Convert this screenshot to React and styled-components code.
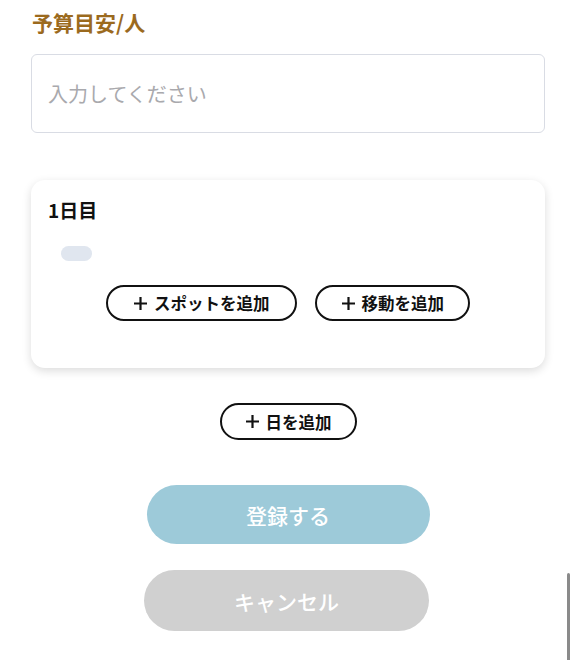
import styled, { createGlobalStyle } from "styled-components";

const GlobalStyle = createGlobalStyle`
  body {
    margin: 0;
    background: #fff;
    font-family: "Noto Sans CJK JP", "Noto Sans", sans-serif;
  }
`

const Page = styled.div`
  position: relative;
  width: 576px;
  height: 660px;
  overflow: hidden;
  padding: 0 31px;
  box-sizing: border-box;
`

const Label = styled.div`
  color: #9b6a1e;
  font-size: 21px;
  font-weight: 700;
  line-height: 22px;
  margin-top: 11px;
  padding-left: 1px;
`

const Input = styled.input`
  display: block;
  width: 514px;
  height: 79px;
  box-sizing: border-box;
  margin-top: 21px;
  border: 1px solid #d9dce4;
  border-radius: 6px;
  padding: 0 16px;
  font-family: inherit;
  font-size: 20px;
  color: #333;
  outline: none;
  &::placeholder { color: #a9a9ad; }
`

const Card = styled.div`
  margin-top: 47px;
  width: 514px;
  height: 188px;
  box-sizing: border-box;
  border-radius: 14px;
  background: #fff;
  box-shadow: 0 3px 10px rgba(0, 0, 0, 0.14);
  padding: 18px 17px 0;
  display: flex;
  flex-direction: column;
`

const DayTitle = styled.div`
  font-size: 19px;
  font-weight: 700;
  line-height: 24px;
  color: #111;
`

const Chip = styled.div`
  width: 31px;
  height: 15px;
  border-radius: 8px;
  background: #e0e6ef;
  margin: 24px 0 0 13px;
`

const ButtonRow = styled.div`
  display: flex;
  justify-content: center;
  gap: 18px;
  margin-top: 24px;
`

const OutlineButton = styled.button`
  display: inline-flex;
  align-items: center;
  justify-content: center;
  gap: 6px;
  height: ${p => p.$h || 36}px;
  padding: 0 ${p => p.$px || 24}px;
  border: 2px solid #111;
  border-radius: 20px;
  background: #fff;
  font-family: inherit;
  font-size: 16.5px;
  font-weight: 700;
  color: #111;
  box-sizing: border-box;
`

const Plus = () => (
  <svg width="15" height="15" viewBox="0 0 15 15">
    <path d="M7.5 1v13M1 7.5h13" stroke="#111" strokeWidth="2.2" />
  </svg>
)

const Center = styled.div`
  display: flex;
  justify-content: center;
  margin-top: ${p => p.$mt}px;
`

const BigButton = styled.button`
  width: ${p => p.$w}px;
  height: ${p => p.$h}px;
  border: none;
  border-radius: 32px;
  background: ${p => p.$bg};
  color: #fff;
  font-family: inherit;
  font-size: 21px;
  font-weight: 500;
  margin-left: ${p => p.$ml || 0}px;
`

const ScrollThumb = styled.div`
  position: absolute;
  right: 6px;
  top: 573px;
  width: 3px;
  height: 90px;
  border-radius: 2px;
  background: #8a8a8a;
`

export default function App() {
  return (
    <Page>
      <GlobalStyle />
      <Label>予算目安/人</Label>
      <Input placeholder="入力してください" />
      <Card>
        <DayTitle>1日目</DayTitle>
        <Chip />
        <ButtonRow>
          <OutlineButton $px={25}><Plus />スポットを追加</OutlineButton>
          <OutlineButton $px={24}><Plus />移動を追加</OutlineButton>
        </ButtonRow>
      </Card>
      <Center $mt={35}>
        <OutlineButton $h={37} $px={23}><Plus />日を追加</OutlineButton>
      </Center>
      <Center $mt={45}>
        <BigButton $w={283} $h={59} $bg="#9dcad9">登録する</BigButton>
      </Center>
      <Center $mt={26}>
        <BigButton $w={285} $h={61} $bg="#d0d0d0" $ml={-3}>キャンセル</BigButton>
      </Center>
      <ScrollThumb />
    </Page>
  )
}
